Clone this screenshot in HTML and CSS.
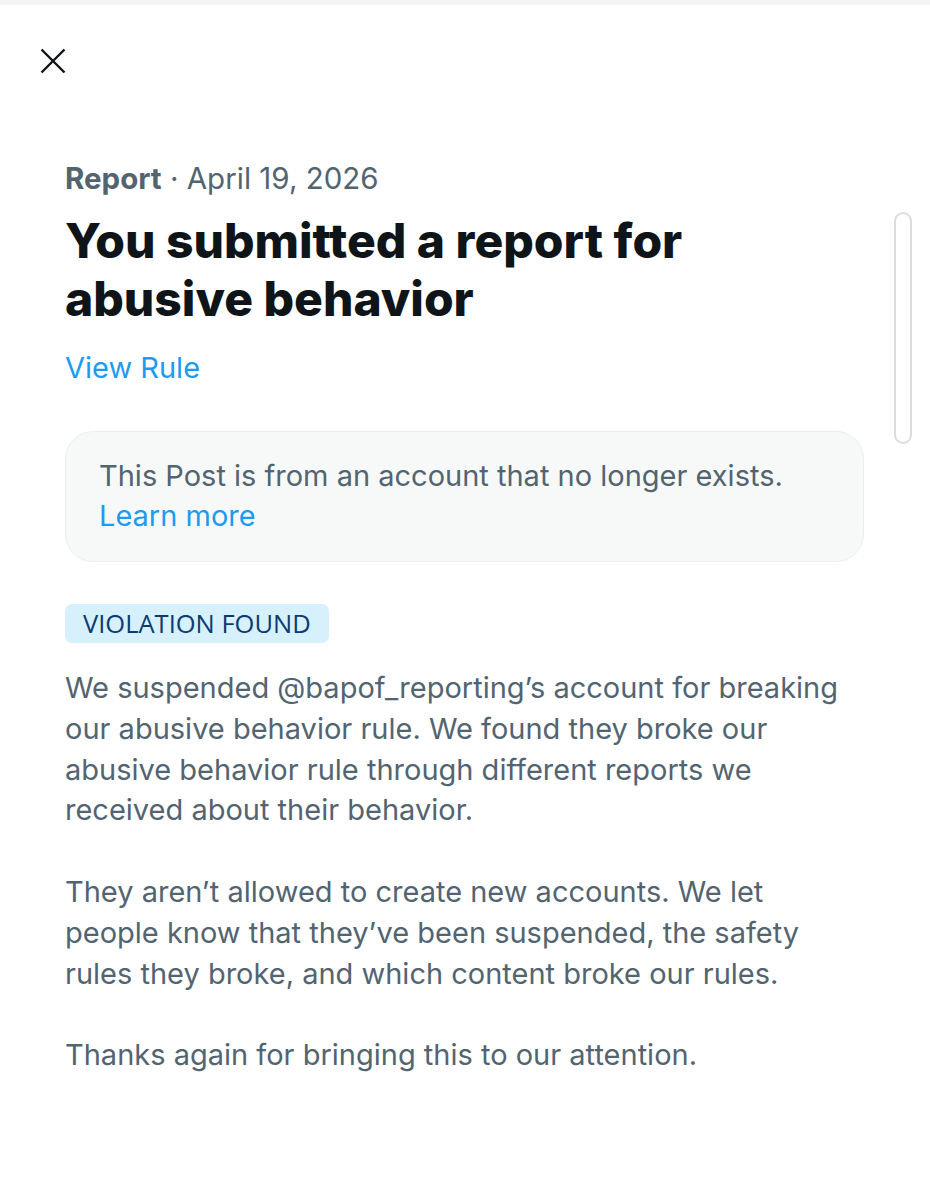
FILE: index.html
```html
<!DOCTYPE html>
<html lang="en">
<head>
<meta charset="utf-8">
<title>Report</title>
<link rel="stylesheet" href="styles.css">
</head>
<body>
<div class="topband"></div>
<header class="header">
  <button class="close" aria-label="Close">
    <svg viewBox="0 0 26 26" width="26" height="26"><path d="M1.5 1.5 L24.5 24.5 M24.5 1.5 L1.5 24.5" stroke="#0f1419" stroke-width="2.4" fill="none"/></svg>
  </button>
</header>
<main class="content">
  <p class="meta"><span class="meta-strong">Report</span> · April 19, 2026</p>
  <h1 class="title">You submitted a report for abusive behavior</h1>
  <a class="link rule-link" href="#">View Rule</a>
  <div class="notice">
    <p class="notice-text">This Post is from an account that no longer exists.<br><a class="link" href="#">Learn more</a></p>
  </div>
  <span class="badge">VIOLATION FOUND</span>
  <div class="body">
    <p>We suspended @bapof_reporting’s account for breaking our abusive behavior rule. We found they broke our abusive behavior rule through different reports we received about their behavior.</p>
    <p>They aren’t allowed to create new accounts. We let people know that they’ve been suspended, the safety rules they broke, and which content broke our rules.</p>
    <p>Thanks again for bringing this to our attention.</p>
  </div>
</main>
<div class="scrollbar"></div>
</body>
</html>
```
FILE: styles.css
```css
html, body {
  margin: 0;
  padding: 0;
  background: #ffffff;
}
body {
  font-family: Inter, "Noto Sans", "Liberation Sans", sans-serif;
  color: #536471;
  width: 930px;
  min-height: 1200px;
  position: relative;
}
.topband {
  height: 5px;
  background: #f4f4f4;
}
.header {
  height: 110px;
  padding-left: 40px;
  padding-top: 43px;
  box-sizing: border-box;
}
.close {
  border: 0;
  background: none;
  padding: 0;
  width: 26px;
  height: 26px;
  display: block;
}
.close svg { display: block; }
.content {
  padding: 0 66px 0 65px;
}
.meta {
  margin: 45px 0 0;
  font-size: 29.5px;
  line-height: 36px;
}
.meta-strong {
  font-weight: 700;
}
.title {
  margin: 16px 0 0;
  font-size: 48px;
  line-height: 58px;
  font-weight: 800;
  color: #0f1419;
  max-width: 700px;
}
.link {
  color: #1d9bf0;
  text-decoration: none;
}
.rule-link {
  display: block;
  margin-top: 20px;
  font-size: 29px;
  line-height: 40px;
}
.notice {
  margin-top: 43px;
  background: #f7f9f9;
  border: 1px solid #eaeeef;
  border-radius: 28px;
  padding: 24px 33px 25px;
}
.notice-text {
  margin: 0;
  font-size: 29px;
  line-height: 40px;
  color: #536471;
}
.badge {
  display: inline-block;
  margin-top: 42px;
  background: #d6f1fc;
  color: #0b3b72;
  font-family: "Open Sans", "Noto Sans", sans-serif;
  font-size: 25.5px;
  line-height: 39px;
  padding: 0 18px;
  border-radius: 7px;
}
.body {
  margin-top: 25px;
}
.body p {
  margin: 0 0 40.8px;
  font-size: 29px;
  line-height: 40.8px;
  color: #536471;
}
.scrollbar {
  position: absolute;
  left: 894px;
  top: 212px;
  width: 14px;
  height: 228px;
  border: 2px solid #dcdcdc;
  border-radius: 10px;
}
```
